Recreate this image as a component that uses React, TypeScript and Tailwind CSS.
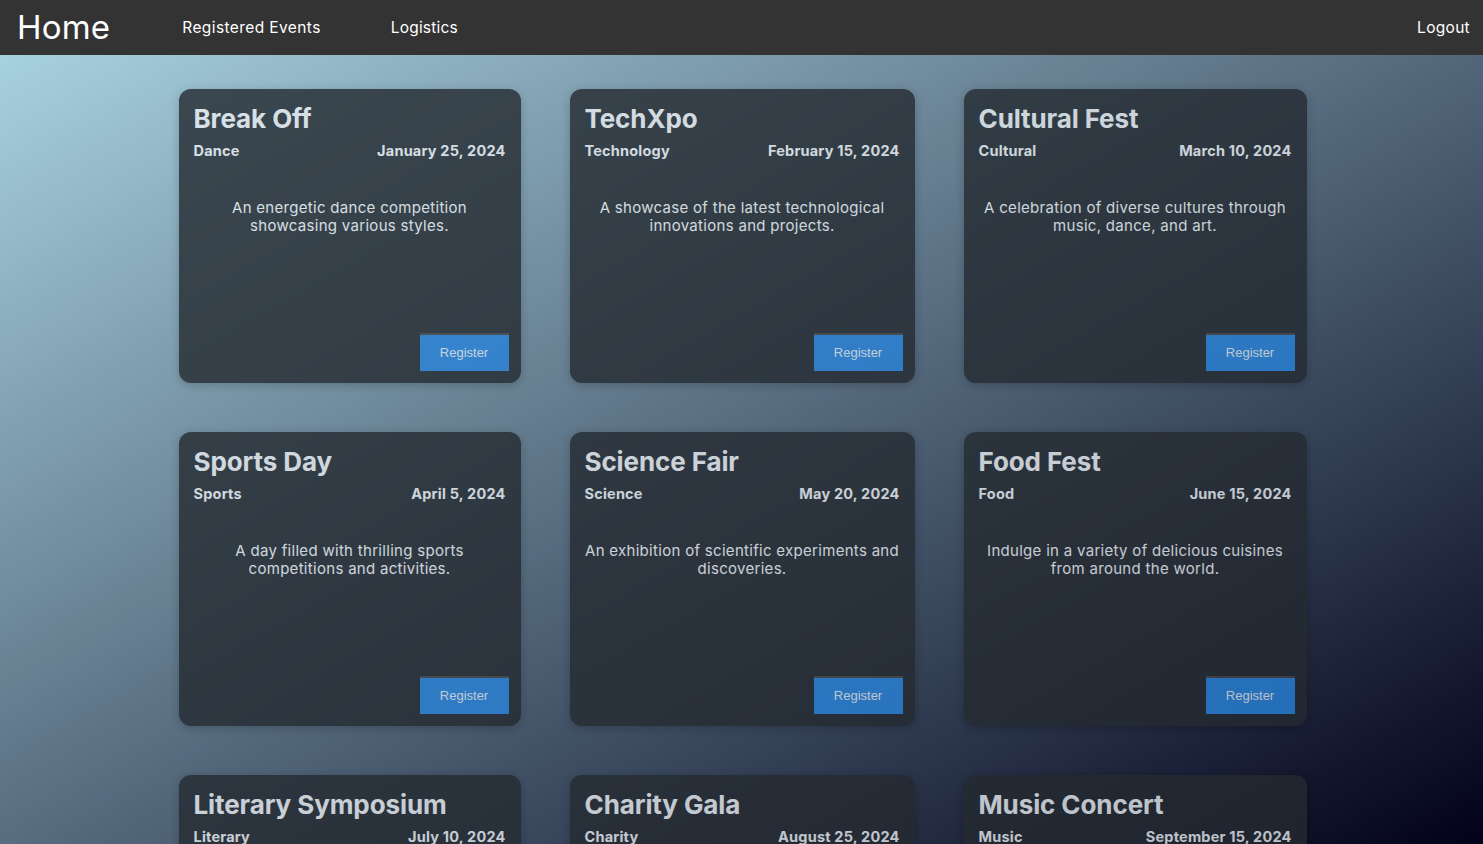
import React from "react";

const events = [
  { title: "Break Off", cat: "Dance", date: "January 25, 2024", desc: "An energetic dance competition showcasing various styles." },
  { title: "TechXpo", cat: "Technology", date: "February 15, 2024", desc: "A showcase of the latest technological innovations and projects." },
  { title: "Cultural Fest", cat: "Cultural", date: "March 10, 2024", desc: "A celebration of diverse cultures through music, dance, and art." },
  { title: "Sports Day", cat: "Sports", date: "April 5, 2024", desc: "A day filled with thrilling sports competitions and activities." },
  { title: "Science Fair", cat: "Science", date: "May 20, 2024", desc: "An exhibition of scientific experiments and discoveries." },
  { title: "Food Fest", cat: "Food", date: "June 15, 2024", desc: "Indulge in a variety of delicious cuisines from around the world." },
  { title: "Literary Symposium", cat: "Literary", date: "July 10, 2024", desc: "A gathering of writers and readers celebrating literature." },
  { title: "Charity Gala", cat: "Charity", date: "August 25, 2024", desc: "An elegant evening raising funds for a good cause." },
  { title: "Music Concert", cat: "Music", date: "September 15, 2024", desc: "Live performances from talented musicians and bands." },
];

export default function App() {
  return (
    <div
      className="min-h-screen bg-fixed bg-[linear-gradient(to_bottom_right,#add8e6,#02021a)]"
      style={{ fontFamily: "Inter, 'Noto Sans', sans-serif" }}
    >
      <nav className="h-[55px] bg-[#333333] flex items-center text-white">
        <div className="pl-[17px] text-[33px] leading-none tracking-[0.2px]">Home</div>
        <div className="ml-[72px] text-[15.5px] tracking-[0.4px]">Registered Events</div>
        <div className="ml-[70px] text-[15.5px] tracking-[0.2px]">Logistics</div>
        <div className="ml-auto pr-[13px] text-[15.5px] tracking-[0.3px]">Logout</div>
      </nav>
      <div className="w-[1128px] mx-auto pl-[1px] pt-[34px] grid grid-cols-[342px_345px_343px] gap-x-[49px] gap-y-[49px]">
        {events.map((e) => (
          <div
            key={e.title}
            className="h-[294px] rounded-[12px] bg-[#242a31] opacity-80 text-[#e8ecef] flex flex-col px-[15px] pt-[14px] pb-[12px] shadow-[0_2px_8px_rgba(0,0,0,0.25)]"
          >
            <div className="text-[26px] font-bold leading-[32px] tracking-[-0.1px]">{e.title}</div>
            <div className="flex justify-between text-[14.5px] font-bold leading-[20px] mt-[6px] tracking-[0.2px]">
              <span>{e.cat}</span>
              <span>{e.date}</span>
            </div>
            <div className="mt-[38px] text-center text-[15px] leading-[18px] tracking-[0.3px] px-0">{e.desc}</div>
            <div className="mt-auto flex justify-end mr-[-3px]">
              <button
                className="w-[89px] h-[38px] bg-[#2882d9] text-[#dfe6ee] text-[13px] border-t-2 border-[#444] "
                style={{ fontFamily: "'Liberation Sans', Arial, sans-serif" }}
              >
                Register
              </button>
            </div>
          </div>
        ))}
      </div>
    </div>
  );
}
